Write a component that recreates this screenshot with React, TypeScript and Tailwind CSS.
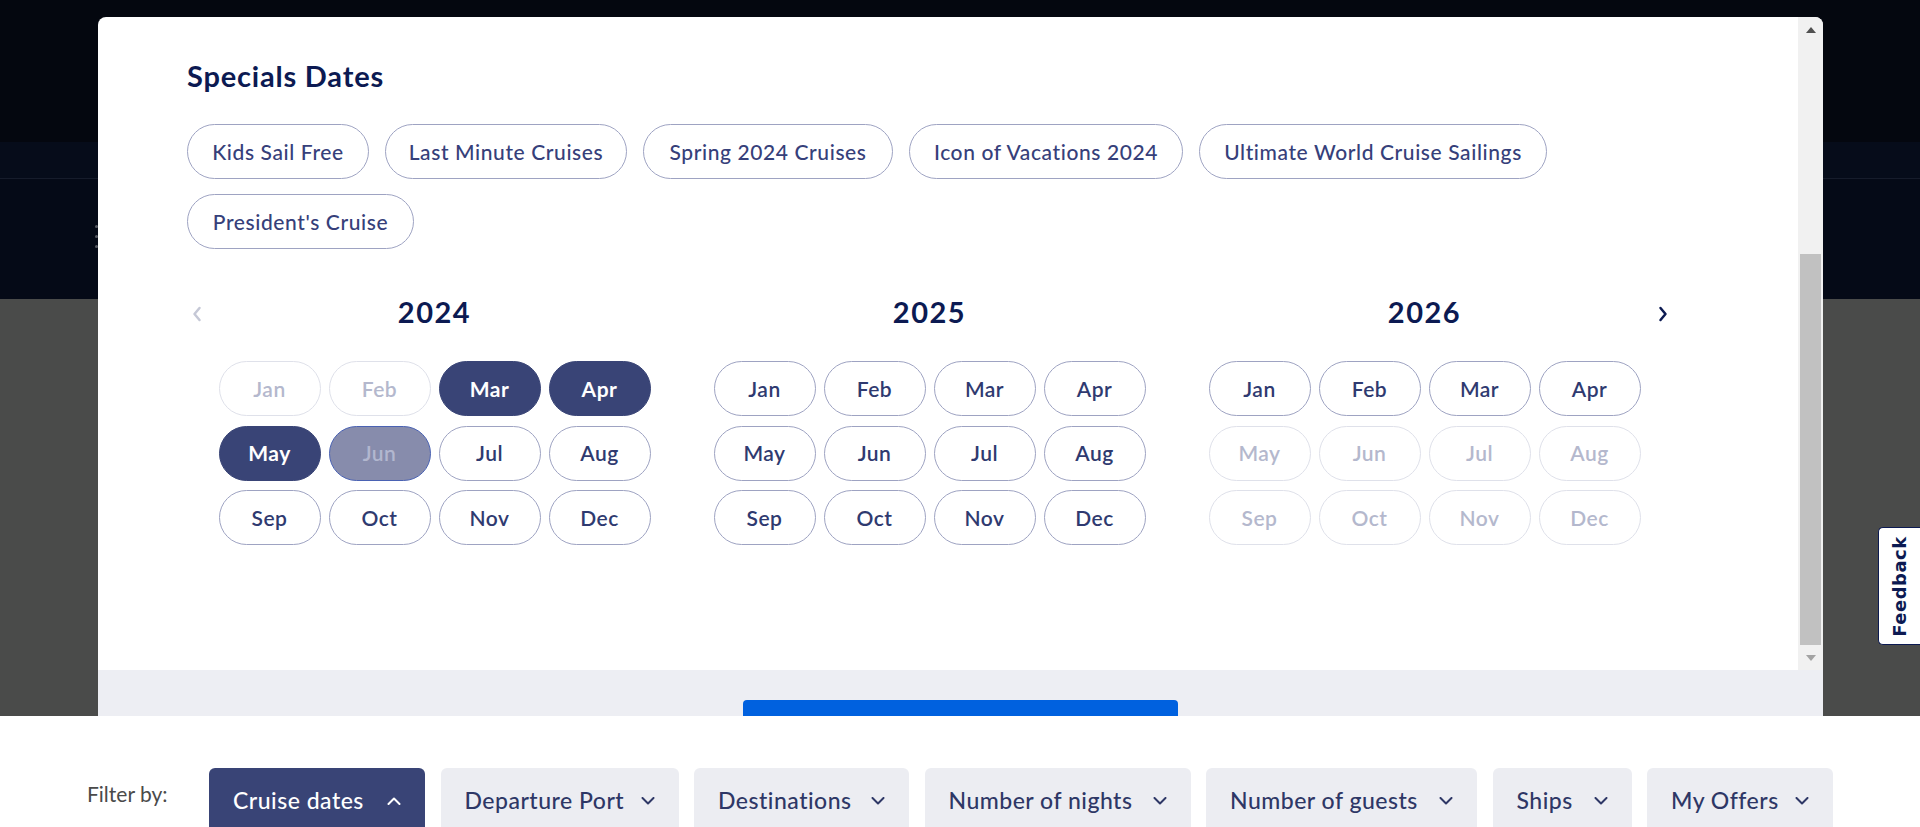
import React from 'react';

type MonthState = 'normal' | 'disabled' | 'selected' | 'pending';

const MONTHS = ['Jan', 'Feb', 'Mar', 'Apr', 'May', 'Jun', 'Jul', 'Aug', 'Sep', 'Oct', 'Nov', 'Dec'];

const monthStyles: Record<MonthState, string> = {
  normal: 'border-[#9ea3c2] text-[#2f3a70] font-semibold',
  disabled: 'border-[#dfe1ea] text-[#b4b8cd] font-semibold',
  selected: 'border-[#394476] bg-[#394476] text-white font-bold',
  pending: 'border-[#4a62b3] bg-[#878cac] text-[#b2b7cf] font-semibold',
};

const years: { year: number; states: MonthState[] }[] = [
  {
    year: 2024,
    states: ['disabled', 'disabled', 'selected', 'selected', 'selected', 'pending', 'normal', 'normal', 'normal', 'normal', 'normal', 'normal'],
  },
  { year: 2025, states: Array(12).fill('normal') },
  {
    year: 2026,
    states: ['normal', 'normal', 'normal', 'normal', 'disabled', 'disabled', 'disabled', 'disabled', 'disabled', 'disabled', 'disabled', 'disabled'],
  },
];

const specials = [
  { label: 'Kids Sail Free', w: 'w-[182px]' },
  { label: 'Last Minute Cruises', w: 'w-[242px]' },
  { label: 'Spring 2024 Cruises', w: 'w-[250px]' },
  { label: 'Icon of Vacations 2024', w: 'w-[274px]' },
  { label: 'Ultimate World Cruise Sailings', w: 'w-[348px]' },
  { label: "President's Cruise", w: 'w-[227px]' },
];

const filters = [
  { label: 'Cruise dates', w: 'w-[216px]', active: true },
  { label: 'Departure Port', w: 'w-[238px]' },
  { label: 'Destinations', w: 'w-[215px]' },
  { label: 'Number of nights', w: 'w-[266px]' },
  { label: 'Number of guests', w: 'w-[271px]' },
  { label: 'Ships', w: 'w-[139px]' },
  { label: 'My Offers', w: 'w-[186px]' },
];

const Chevron = ({ up, className }: { up?: boolean; className?: string }) => (
  <svg width="14" height="8" viewBox="0 0 14 8" className={className} fill="none" stroke="currentColor" strokeWidth="2" strokeLinecap="round" strokeLinejoin="round">
    {up ? <polyline points="1.5,7 7,1.5 12.5,7" /> : <polyline points="1.5,1 7,6.5 12.5,1" />}
  </svg>
);

const YearBlock = ({ year, states }: { year: number; states: MonthState[] }) => (
  <div className="flex flex-col items-center">
    <h3 className="text-[29px] leading-[34px] font-bold tracking-[1.5px] text-[#0c1a52]">{year}</h3>
    <div className="mt-[32px] grid w-[432px] grid-cols-4 gap-x-[8px] gap-y-[9.5px]">
      {MONTHS.map((m, i) => (
        <button
          key={m}
          className={`flex h-[55px] items-center justify-center rounded-full border text-[21px] tracking-[0.5px] ${monthStyles[states[i]]}`}
        >
          {m}
        </button>
      ))}
    </div>
  </div>
);

const Modal = () => (
  <div className="absolute left-[98px] top-[17px] flex h-[760px] w-[1725px] flex-col overflow-hidden rounded-t-[8px] bg-white">
    <div className="flex h-[653px] shrink-0">
      <div className="flex-1 pl-[89px] pt-[42px]">
        <h2 className="text-[29px] leading-[34px] font-bold tracking-[0.8px] text-[#0c1a52]">Specials Dates</h2>

        <div className="mt-[31px] flex w-[1485px] flex-wrap gap-x-[16px] gap-y-[15px]">
          {specials.map((s) => (
            <button
              key={s.label}
              className={`flex h-[55px] items-center justify-center rounded-full border border-[#9ea3c2] text-[21px] tracking-[0.6px] font-medium text-[#36407a] ${s.w}`}
            >
              {s.label}
            </button>
          ))}
        </div>

        <div className="relative mt-[46px] grid w-[1485px] grid-cols-3">
          {years.map((y) => (
            <YearBlock key={y.year} year={y.year} states={y.states} />
          ))}
          <svg className="absolute left-[5px] top-[11px]" width="10" height="16" viewBox="0 0 10 16" fill="none" stroke="#c5c8d6" strokeWidth="2.5" strokeLinecap="round" strokeLinejoin="round">
            <polyline points="7.5,2 2.5,8 7.5,14" />
          </svg>
          <svg className="absolute right-[4px] top-[11px]" width="10" height="16" viewBox="0 0 10 16" fill="none" stroke="#0c1a52" strokeWidth="2.5" strokeLinecap="round" strokeLinejoin="round">
            <polyline points="2.5,2 7.5,8 2.5,14" />
          </svg>
        </div>
      </div>

      {/* scrollbar */}
      <div className="flex w-[25px] flex-col items-center bg-[#f1f1f1]">
        <div className="flex h-[22px] w-full items-center justify-center pt-[4px]">
          <div className="h-0 w-0 border-x-[5.5px] border-b-[6px] border-x-transparent border-b-[#505050]" />
        </div>
        <div className="mt-[215px] h-[391px] w-[21px] bg-[#c1c1c1]" />
        <div className="flex flex-1 items-center justify-center">
          <div className="h-0 w-0 border-x-[5.5px] border-t-[6px] border-x-transparent border-t-[#a3a3a3]" />
        </div>
      </div>
    </div>

    <div className="flex flex-1 justify-center bg-[#edeef3] pt-[30px]">
      <button className="h-[60px] w-[435px] rounded-[4px] bg-[#0061df]" />
    </div>
  </div>
);

const FilterBar = () => (
  <div className="flex h-[111px] shrink-0 items-start overflow-hidden bg-white pl-[87px]">
    <span className="mt-[66px] w-[122px] text-[21px] leading-[24px] text-[#4a4a4a]">Filter by:</span>
    <div className="mt-[52px] flex gap-[15.5px]">
      {filters.map((f) => (
        <button
          key={f.label}
          className={`flex h-[70px] items-start justify-between rounded-t-[6px] px-[24px] pt-[20px] text-[23px] leading-[24px] font-medium tracking-[0.5px] ${f.w} ${
            f.active ? 'bg-[#394476] text-white' : 'bg-[#ecedf2] text-[#2e3766]'
          }`}
        >
          <span>{f.label}</span>
          <Chevron up={f.active} className="mt-[9px]" />
        </button>
      ))}
    </div>
  </div>
);

export default function App() {
  return (
    <div className="flex h-[827px] w-[1920px] flex-col overflow-hidden font-['Lato',sans-serif]">
      <div className="relative flex h-[716px] shrink-0 flex-col overflow-hidden">
        {/* dimmed page behind the modal */}
        <div className="h-[142px] bg-[#04070f]" />
        <div className="h-[37px] border-b border-[#161c2b] bg-[#060c1a]" />
        <div className="flex h-[120px] flex-col gap-[7px] bg-[#050a17] pl-[95px] pt-[46px]">
          <div className="h-[3px] w-[3px] rounded-full bg-[#5a5e66]" />
          <div className="h-[3px] w-[3px] rounded-full bg-[#5a5e66]" />
          <div className="h-[3px] w-[3px] rounded-full bg-[#5a5e66]" />
        </div>
        <div className="flex-1 bg-[#4a4b4a]" />

        <Modal />

        <div className="absolute right-0 top-[527px] flex h-[118px] w-[42px] items-center justify-center rounded-l-[5px] border border-r-0 border-[#0c1a52] bg-white">
          <span className="-rotate-90 whitespace-nowrap text-[18px] font-bold tracking-[0.5px] text-[#0c1a52] font-['DejaVu_Sans',sans-serif]">
            Feedback
          </span>
        </div>
      </div>
      <FilterBar />
    </div>
  );
}
